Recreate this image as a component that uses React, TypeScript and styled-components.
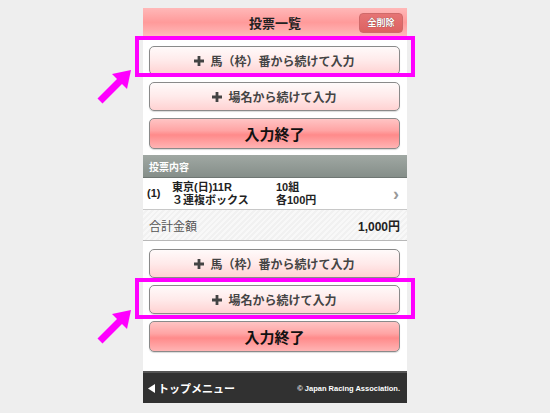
import styled, { createGlobalStyle } from 'styled-components';

const GlobalStyle = createGlobalStyle`
  html, body {
    margin: 0;
    padding: 0;
    background: #eeeeee;
  }
  body {
    font-family: "Liberation Sans", "Noto Sans CJK JP", sans-serif;
  }
`;

const ScStage = styled.div`
  position: relative;
  width: 550px;
  height: 413px;
  overflow: hidden;
  display: flex;
  justify-content: center;
  padding-top: 8px;
  box-sizing: border-box;
`;

const ScPhone = styled.div`
  width: 264px;
  height: 395px;
  background: #ffffff;
  display: flex;
  flex-direction: column;
`;

const ScHeader = styled.div`
  position: relative;
  height: 32px;
  flex: none;
  box-sizing: border-box;
  padding-bottom: 4px;
  display: flex;
  align-items: center;
  justify-content: center;
  background: linear-gradient(#ffb8b8 0%, #ff9a9a 45%, #ffb4b4 80%, #ffcaca 100%);
  font-size: 13px;
  font-weight: bold;
  color: #222;
`;

const ScClearBtn = styled.div`
  position: absolute;
  right: 4px;
  top: 5px;
  width: 44px;
  height: 20px;
  box-sizing: border-box;
  border-radius: 4px;
  background: linear-gradient(#e67474, #dc6262);
  border: 1px solid #cf6a6a;
  color: #fff;
  font-size: 9px;
  font-weight: bold;
  display: flex;
  align-items: flex-start;
  justify-content: center;
  padding-top: 2px;
  text-shadow: 0 0 1px rgba(0, 0, 0, 0.6);
`;

const ScBtnGroup = styled.div<{ $top: number }>`
  display: flex;
  flex-direction: column;
  gap: 7px;
  padding: ${(p) => p.$top}px 7px 0 6px;
`;

const ScButton = styled.div<{ $primary?: boolean }>`
  height: ${(p) => (p.$primary ? 31 : 29)}px;
  box-sizing: border-box;
  border: 1px solid #8a8a8a;
  border-radius: 5px;
  display: flex;
  align-items: center;
  justify-content: center;
  gap: 6px;
  font-weight: bold;
  font-size: ${(p) => (p.$primary ? 15 : 12)}px;
  color: ${(p) => (p.$primary ? '#111' : '#444')};
  background: ${(p) =>
    p.$primary
      ? 'linear-gradient(#ffc4c4 0%, #ffa4a4 40%, #ff8a8a 55%, #ffb4b4 100%)'
      : 'linear-gradient(#fffafa 0%, #ffeaea 50%, #ffd2d2 100%)'};
  box-shadow: 0 1px 1px rgba(0, 0, 0, 0.15);
`;

const ScSectionTitle = styled.div`
  margin-top: 6px;
  height: 22px;
  padding-left: 6px;
  display: flex;
  align-items: center;
  background: linear-gradient(#a0a8a3, #858e89);
  border-bottom: 1px solid #6f7773;
  color: #fff;
  font-size: 10px;
  font-weight: bold;
`;

const ScBetRow = styled.div`
  height: 31px;
  display: grid;
  grid-template-columns: 25px 104px 1fr 14px;
  align-items: center;
  padding-left: 4px;
  border-bottom: 1px solid #c8c8c8;
  font-size: 11px;
  font-weight: bold;
  color: #222;
  line-height: 13px;
`;

const ScStack = styled.div`
  display: flex;
  flex-direction: column;
`;

const ScChevron = styled.div`
  color: #999;
  font-size: 18px;
  font-weight: bold;
  line-height: 18px;
`;

const ScTotalRow = styled.div`
  height: 30px;
  display: flex;
  align-items: center;
  justify-content: space-between;
  padding: 0 7px 0 6px;
  background: repeating-linear-gradient(135deg, #f8f8f8 0 2px, #f1f1f1 2px 4px);
  border-bottom: 1px solid #b8b8b8;
  font-size: 12px;
  color: #555;
`;

const ScTotalAmount = styled.span`
  font-weight: bold;
  color: #222;
  font-size: 12px;
`;

const ScSpacer = styled.div`
  flex: 1;
`;

const ScFooter = styled.div`
  height: 30px;
  flex: none;
  display: flex;
  align-items: center;
  justify-content: space-between;
  padding: 0 7px 0 5px;
  background: #313131;
  border-top: 2px solid #555;
  color: #fff;
  font-weight: bold;
`;

const ScMenuLink = styled.span`
  font-size: 11px;
  display: flex;
  align-items: center;
  gap: 3px;
`;

const ScCopy = styled.span`
  font-size: 7.5px;
`;

const ScHighlight = styled.div<{ $top: number; $height: number }>`
  position: absolute;
  left: 135px;
  width: 280px;
  top: ${(p) => p.$top}px;
  height: ${(p) => p.$height}px;
  box-sizing: border-box;
  border: 4px solid #ff00ff;
`;

const ScArrow = styled.svg<{ $top: number }>`
  position: absolute;
  left: 92px;
  top: ${(p) => p.$top}px;
`;

function Plus() {
  return (
    <svg width='10' height='10' viewBox='0 0 10 10'>
      <path d='M3.6 0h2.8v3.6H10v2.8H6.4V10H3.6V6.4H0V3.6h3.6z' fill='#444' />
    </svg>
  );
}

function Triangle() {
  return (
    <svg width='7' height='9' viewBox='0 0 7 9'>
      <polygon points='7,0 7,9 0,4.5' fill='#fff' />
    </svg>
  );
}

function Arrow({ top }: { top: number }) {
  return (
    <ScArrow $top={top} width='44' height='42' viewBox='0 0 44 42'>
      <line x1='8' y1='37' x2='30' y2='15' stroke='#ff00ff' strokeWidth='7' />
      <polygon points='39,6 20,10 35,25' fill='#ff00ff' />
    </ScArrow>
  );
}

export default function App() {
  return (
    <>
      <GlobalStyle />
      <ScStage>
        <ScPhone>
          <ScHeader>
            投票一覧
            <ScClearBtn>全削除</ScClearBtn>
          </ScHeader>

          <ScBtnGroup $top={6}>
            <ScButton>
              <Plus />
              馬（枠）番から続けて入力
            </ScButton>
            <ScButton>
              <Plus />
              場名から続けて入力
            </ScButton>
            <ScButton $primary>入力終了</ScButton>
          </ScBtnGroup>

          <ScSectionTitle>投票内容</ScSectionTitle>
          <ScBetRow>
            <span>(1)</span>
            <ScStack>
              <span>東京(日)11R</span>
              <span>３連複ボックス</span>
            </ScStack>
            <ScStack>
              <span>10組</span>
              <span>各100円</span>
            </ScStack>
            <ScChevron>›</ScChevron>
          </ScBetRow>
          <ScTotalRow>
            合計金額
            <ScTotalAmount>1,000円</ScTotalAmount>
          </ScTotalRow>

          <ScBtnGroup $top={8}>
            <ScButton>
              <Plus />
              馬（枠）番から続けて入力
            </ScButton>
            <ScButton>
              <Plus />
              場名から続けて入力
            </ScButton>
            <ScButton $primary>入力終了</ScButton>
          </ScBtnGroup>

          <ScSpacer />
          <ScFooter>
            <ScMenuLink>
              <Triangle />
              トップメニュー
            </ScMenuLink>
            <ScCopy>© Japan Racing Association.</ScCopy>
          </ScFooter>
        </ScPhone>

        <ScHighlight $top={36} $height={41} />
        <ScHighlight $top={278} $height={41} />
        <Arrow top={64} />
        <Arrow top={304} />
      </ScStage>
    </>
  );
}
